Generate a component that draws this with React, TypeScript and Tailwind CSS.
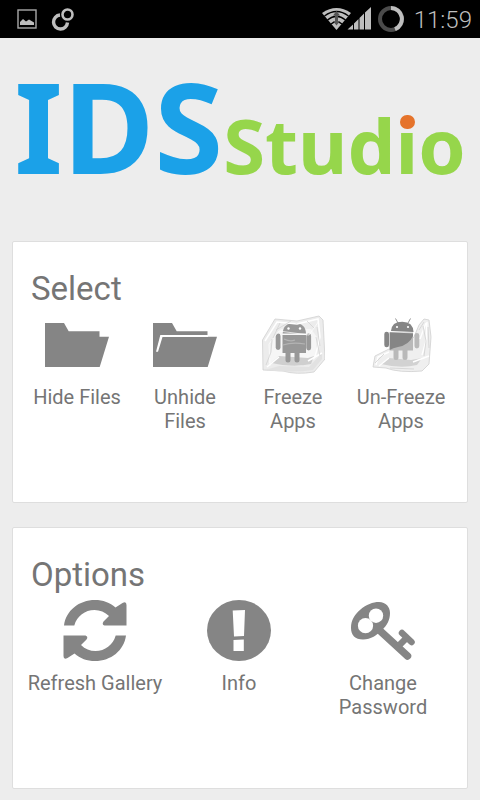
import type { ReactNode } from "react";

function StatusBar() {
  return (
    <header className="flex h-[38px] items-center justify-between bg-black pl-4 pr-2 text-[#bebebe]">
      <div className="flex items-center gap-3">
        <svg viewBox="0 0 22 22" className="size-[22px]" fill="none" aria-hidden="true">
          <rect x="2" y="2" width="18" height="18" stroke="#a9a9a9" strokeWidth="1.4" />
          <path d="M4 17V14L7 11L10 13.5L13 11.5L18 14.5V17Z" fill="#bebebe" />
        </svg>
        <svg viewBox="0 0 26 24" className="h-6 w-[26px]" fill="none" stroke="#bebebe" aria-hidden="true">
          <path d="M10 8A7 7 0 1 0 17.5 15.5" strokeWidth="3.4" />
          <circle cx="17.5" cy="7.500" r="5" strokeWidth="2.600" />
        </svg>
      </div>
      <div className="flex items-center">
        <svg viewBox="0 0 50 24" className="h-6 w-[50px]" aria-hidden="true">
          <path d="M0 6Q14.500 -4 29 6L14.500 23Z" fill="#bebebe" />
          <path d="M2.500 9Q14.500 0 26.500 9M5.500 13Q14.500 5.500 23.500 13M9 17Q14.500 12.500 20 17" fill="none" stroke="#000" strokeWidth="1.3" />
          <path d="M14.500 4L18 8.500H16V14H18L14.500 18.500L11 14H13V8.500H11Z" fill="#555" />
          <path d="M25.500 22.500L31 17.500V22.500ZM32 16.500L36.500 12V22.500H32ZM37.500 11L42 6.500V22.500H37.500ZM43 5.500L49 0V22.500H43Z" fill="#bebebe" />
        </svg>
        <svg viewBox="0 0 26 26" className="ml-1.5 size-[26px]" fill="none" strokeWidth="4" aria-hidden="true">
          <circle cx="13" cy="13" r="11" stroke="#4b4b4b" />
          <path d="M13 2A11 11 0 0 1 17 23.200" stroke="#bebebe" />
        </svg>
        <time className="ml-2.5 pt-px text-2xl font-light">11:59</time>
      </div>
    </header>
  );
}

function Logo() {
  return (
    <h1 className="flex items-baseline justify-center whitespace-nowrap font-['Noto_Sans','Open_Sans',sans-serif] font-bold leading-none">
      <span className="text-[125px] leading-[125px] text-[#1ba1e8]">IDS</span>
      <span className="text-[76px] leading-none text-[#96d64b]">
        Stud
        <span className="relative">
          i
          <span className="absolute left-1 top-[22px] h-[14px] w-[15px] rounded-full bg-[#e5732b]" />
        </span>
        o
      </span>
    </h1>
  );
}

function Icon({ children }: { children: ReactNode }) {
  return (
    <svg viewBox="0 0 64 64" className="size-16 text-[#858585]" fill="currentColor" aria-hidden="true">
      {children}
    </svg>
  );
}

function FolderIcon() {
  return (
    <Icon>
      <path d="M0 10H19L23.700 18.300H54.500V23.700H64L54.700 54H0Z" />
    </Icon>
  );
}

function OpenFolderIcon() {
  return (
    <Icon>
      <path d="M0 10H19L23.700 18.300H54.500V23.700H64L54.700 54H0Z" />
      <path d="M55 22H7.300L3 38.700H5L9.500 23.900H55Z" fill="white" />
    </Icon>
  );
}

function FreezeIcon() {
  return (
    <Icon>
      <path d="M2 57L1.500 27L14 6L36 8L58 3L62 7L64 46L53 59Q35 62 22 58Z" fill="#ececec" stroke="#d0d0d0" strokeWidth="0.800" />
      <path d="M8 50L12 27L20 16H50L56 24L54 46L40 53Z" fill="#f6f6f6" />
      <path d="M10 50L18 43L47 45L53 43L50 51Q32 55 10 50Z" fill="#cfcfcf" />
      <path d="M4 57L18 53L48 54L61 40V46L52 57Q32 60 4 57Z" fill="#e2e2e2" />
      <g fill="#989898">
        <path d="M21.700 20.500Q22 10 33.300 10Q44.500 10 45 20.500Z" />
        <path d="M21.500 22H45V40H38.500V47Q38.500 49.500 36 49.500Q33.500 49.500 33.500 47V40H29.500V47Q29.500 49.500 27 49.500Q24.500 49.500 24.500 47V40H21.500Z" />
        <rect x="14.700" y="20.500" width="4.800" height="16.500" rx="2.400" />
        <rect x="45.300" y="20.500" width="4.800" height="17" rx="2.400" />
      </g>
      <circle cx="27.500" cy="15.500" r="1.200" fill="white" />
      <circle cx="39" cy="15.500" r="1.200" fill="white" />
      <path d="M22 32Q31 29 44 31M23 26Q29 29 34 27" stroke="#b4b4b4" strokeWidth="1.200" fill="none" />
      <g fill="none" stroke="white" strokeWidth="1.500">
        <path d="M4 28L16 9L36 11L57 6L59 24L54 44" />
        <path d="M9 53L8 31L18 18L48 22L58 8" strokeWidth="1" opacity="0.700" />
        <path d="M6 54L18 44M47 48L61 40" />
      </g>
      <path d="M15 17L30 8M11 26L10 39L5 52M55 24L59 43M19 10L12 25M46 8L53 15M56 14L59 33" fill="none" stroke="#d0d0d0" strokeWidth="0.700" />
    </Icon>
  );
}

function UnfreezeIcon() {
  return (
    <Icon>
      <path d="M4 54L6 43L20 36L34 34L45 24L50 12L55 6L60 7L62 24L60 51L53 58Q30 60 17 55Z" fill="#efefef" stroke="#cfcfcf" strokeWidth="0.800" />
      <path d="M12 51L20 45L42 47L53 45L48 52Q32 56 12 51Z" fill="#d2d2d2" />
      <g fill="#b9b9b9">
        <path d="M20.700 19.500H44V37.500H38.500V44.500Q38.500 47 36 47Q33.500 47 33.500 44.500V37.500H29.500V44.500Q29.500 47 27 47Q24.500 47 24.500 44.500V37.500H20.700Z" />
        <rect x="45.500" y="20" width="4.800" height="15.500" rx="2.400" />
      </g>
      <g fill="#858585">
        <path d="M22 18Q22.500 8.700 33.300 8.700Q44 8.700 44.500 19Z" />
        <path d="M20.700 19.300L44 20.500V23Q40 32 29 34Q24 35 20.700 37Z" />
        <rect x="15.300" y="18.700" width="4.700" height="15.500" rx="2.300" />
        <path d="M29 10L26.500 5.500M39 10L41.500 5.500" stroke="#858585" strokeWidth="0.900" />
      </g>
      <circle cx="28" cy="14" r="1.100" fill="white" />
      <circle cx="39" cy="14" r="1.100" fill="white" />
      <g fill="none" stroke="white" strokeWidth="1.400">
        <path d="M7 52L9 44L20 39M10 53L20 45M53 42L57 28L58 9M51 26L57 10M44 49L60 43" />
      </g>
      <path d="M50 17L55 9M54 13L57 28L55 43M59 14L60 35M6 50L15 41M21 55L45 56" fill="none" stroke="#d0d0d0" strokeWidth="0.800" />
    </Icon>
  );
}

function RefreshIcon() {
  const arrow =
    "M1 26.500C3 11.500 16 1 32 1C40 1 47 3.500 52.500 8.500L59.500 4Q63.500 2 63.500 6V26.500H41.500Q38.500 25.500 40.500 22.500L46 17C42 13 37 11 31.500 11C22 11 14 17 11.300 26.500Z";
  return (
    <Icon>
      <path d={arrow} />
      <path d={arrow} transform="rotate(180 32 31.500)" />
    </Icon>
  );
}

function InfoIcon() {
  return (
    <Icon>
      <ellipse cx="32" cy="31.500" rx="32" ry="30.500" />
      <path d="M25.700 11.500L38 11L37 37L27 37.500ZM26.500 41L36.800 40.500V52H26.500Z" fill="white" />
    </Icon>
  );
}

function KeyIcon() {
  return (
    <Icon>
      <path d="M0 29C0 21 4 15 9.500 10.500C15 5.500 22 3 28 3C35 3 39 8 39 14C39 21 36 26.500 31 31C26 36 20 40.500 12 40.500C4 40.500 0 36 0 29Z" />
      <circle cx="14.500" cy="26.700" r="7.600" fill="white" />
      <circle cx="25" cy="16.700" r="7.200" fill="white" />
      <g fill="none" stroke="currentColor">
        <path d="M26 29L56.500 57" strokeWidth="7.500" strokeLinecap="round" />
        <path d="M47.500 47L56 38.500" strokeWidth="6.500" />
        <path d="M51 34L60.500 43" strokeWidth="6.500" strokeLinecap="round" />
      </g>
    </Icon>
  );
}

function Action({ icon, label }: { icon: ReactNode; label: string }) {
  return (
    <button type="button" className="flex min-w-0 flex-col items-center gap-2 px-1 text-xl leading-6">
      {icon}
      <span>{label}</span>
    </button>
  );
}

function Panel({ title, children }: { title: string; children: ReactNode }) {
  return (
    <section className="mx-3 rounded-xs border border-[#dedede] bg-white pb-[69px] pl-2.5 pr-3 pt-[27px]">
      <h2 className="mb-1 px-2 text-[33px] leading-10">{title}</h2>
      {children}
    </section>
  );
}

export default function App() {
  return (
    <div className="min-h-screen bg-[#ededed] font-[Roboto,sans-serif] text-[#757575]">
      <StatusBar />
      <main className="flex flex-col gap-6 pb-3">
        <div className="overflow-hidden pb-[29px] pt-[25px]">
          <Logo />
        </div>
        <Panel title="Select">
          <div className="grid grid-cols-4">
            <Action icon={<FolderIcon />} label="Hide Files" />
            <Action icon={<OpenFolderIcon />} label="Unhide Files" />
            <Action icon={<FreezeIcon />} label="Freeze Apps" />
            <Action icon={<UnfreezeIcon />} label="Un-Freeze Apps" />
          </div>
        </Panel>
        <Panel title="Options">
          <div className="grid grid-cols-3">
            <Action icon={<RefreshIcon />} label="Refresh Gallery" />
            <Action icon={<InfoIcon />} label="Info" />
            <Action icon={<KeyIcon />} label="Change Password" />
          </div>
        </Panel>
      </main>
    </div>
  );
}
